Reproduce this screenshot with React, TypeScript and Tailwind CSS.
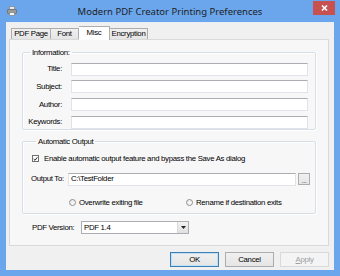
import React from "react";

const F = { fontFamily: '"Liberation Sans", Arial, sans-serif', letterSpacing: "-0.3px" } as React.CSSProperties;

function Input({ value = "", className = "" }: { value?: string; className?: string }) {
  return (
    <div
      className={
        "h-[13px] bg-white border border-[#e2e3ea] border-t-[#abadb3] flex items-center px-[2px] text-[7.8px] text-black leading-none whitespace-nowrap " +
        className
      }
    >
      {value}
    </div>
  );
}

function Group({ title, className = "", children }: { title: string; className?: string; children: React.ReactNode }) {
  return (
    <fieldset
      className={
        "border border-[#d5dfe5] rounded-[2px] shadow-[inset_1px_1px_0_#ffffff,1px_1px_0_#ffffff] " + className
      }
    >
      <legend className="ml-[4px] px-[2px] text-[7.8px] leading-none text-black">{title}</legend>
      {children}
    </fieldset>
  );
}

function Radio({ label }: { label: string }) {
  return (
    <div className="flex items-center gap-[3px]">
      <div className="w-[7px] h-[7px] rounded-full border border-[#8e8f8f] bg-gradient-to-br from-[#e6e6e6] to-white" />
      <span className="text-[7.8px] leading-none whitespace-nowrap">{label}</span>
    </div>
  );
}

function Btn({ label, variant }: { label: string; variant: "default" | "normal" | "disabled" }) {
  const cls =
    variant === "default"
      ? "border-[#3c7fb1] bg-gradient-to-b from-[#f0f0f0] to-[#e5e5e5] text-black shadow-[inset_0_0_0_1px_#bfe0f7]"
      : variant === "normal"
      ? "border-[#acacac] bg-gradient-to-b from-[#f0f0f0] to-[#e5e5e5] text-black"
      : "border-[#d9d9d9] bg-[#f4f4f4] text-[#a0a0a0]";
  return (
    <div className={"w-[49px] h-[15px] border flex items-center justify-center text-[7.8px] leading-none " + cls}>
      {variant === "disabled" ? (
        <span>
          <span className="underline">A</span>pply
        </span>
      ) : (
        label
      )}
    </div>
  );
}

const tabBase =
  "border border-[#adadad] border-b-0 flex items-center justify-center text-[7.8px] leading-none whitespace-nowrap";

export default function App() {
  return (
    <div className="w-[340px] h-[276px] bg-[#6ba6ec] flex flex-col overflow-hidden" style={F}>
      {/* Title bar */}
      <div className="h-[22px] relative flex items-center justify-center shrink-0">
        <svg className="absolute left-[7px] top-[6px]" width="10" height="10" viewBox="0 0 10 10">
          <rect x="2.5" y="0.5" width="5" height="3" fill="#e9e9e9" stroke="#8a8a8a" strokeWidth="0.8" />
          <rect x="0.5" y="3.5" width="9" height="4" rx="0.5" fill="#9a9a9a" stroke="#6e6e6e" strokeWidth="0.8" />
          <rect x="2.5" y="6.5" width="5" height="3" fill="#f4f4f4" stroke="#8a8a8a" strokeWidth="0.8" />
        </svg>
        <span
          className="text-[9.5px] text-[#1e1e1e] leading-none mt-[1px]"
          style={{ fontFamily: '"Noto Sans", "Liberation Sans", sans-serif', letterSpacing: "0px" }}
        >
          Modern PDF Creator Printing Preferences
        </span>
        <div className="absolute right-[5px] top-[1px] w-[22px] h-[14px] bg-[#c75050] flex items-center justify-center">
          <svg width="7" height="6" viewBox="0 0 7 6">
            <path d="M1 0.5 L6 5.5 M6 0.5 L1 5.5" stroke="#ffffff" strokeWidth="1.6" />
          </svg>
        </div>
      </div>

      {/* Client area */}
      <div className="flex-1 mx-[6px] mb-[6px] bg-[#f0f0f0] flex flex-col border-t border-[#e8eef6]">
        {/* Tabs */}
        <div className="flex items-end pl-[5px] h-[16px] relative z-10">
          <div className={tabBase + " h-[11px] w-[40px] bg-gradient-to-b from-[#f0f0f0] to-[#e5e5e5]"}>PDF Page</div>
          <div className={tabBase + " border-l-0 h-[11px] w-[28px] bg-gradient-to-b from-[#f0f0f0] to-[#e5e5e5]"}>Font</div>
          <div className={tabBase + " border-l-0 h-[14px] w-[31px] mb-[-1px] bg-white pb-[2px]"}>Misc</div>
          <div className={tabBase + " border-l-0 h-[11px] w-[38px] bg-gradient-to-b from-[#f0f0f0] to-[#e5e5e5]"}>Encryption</div>
        </div>

        {/* Panel */}
        <div className="ml-[3px] mr-[5px] h-[207px] border border-[#d9d9d9] bg-[#f7f7f7] px-[12px] pt-[9px] flex flex-col">
          <Group title="Information:" className="w-[294px] h-[81px] pl-[3px] pr-[7px] pt-[6px]">
            <div className="flex flex-col gap-[4.6px]">
              {["Title:", "Subject:", "Author:", "Keywords:"].map((l) => (
                <div key={l} className="flex items-center h-[13px]">
                  <div className="w-[37px] text-right text-[7.8px] leading-none pr-[1px]">{l}</div>
                  <Input className="ml-[8px] flex-1" />
                </div>
              ))}
            </div>
          </Group>

          <Group title="Automatic Output" className="w-[294px] h-[76px] mt-[8px] pl-[9px] pr-[5px] pt-[8px]">
            <div className="flex items-center h-[10px] gap-[5px]">
              <div className="w-[7px] h-[7px] border border-[#707070] bg-white flex items-center justify-center">
                <svg width="6" height="6" viewBox="0 0 6 6">
                  <path d="M0.8 3 L2.4 4.6 L5.2 1" stroke="#1a1a1a" strokeWidth="1.2" fill="none" />
                </svg>
              </div>
              <span className="text-[7.8px] leading-none whitespace-nowrap">
                Enable automatic output feature and bypass the Save As dialog
              </span>
            </div>
            <div className="flex items-center mt-[9px] h-[13px]">
              <span className="text-[7.8px] leading-none w-[37px] -ml-[1px] whitespace-nowrap">Output To:</span>
              <Input value="C:\TestFolder" className="w-[228px]" />
              <div className="ml-[2px] w-[12px] h-[12px] border border-[#acacac] bg-gradient-to-b from-[#f0f0f0] to-[#e5e5e5] flex items-end justify-center text-[7px] leading-[7px] text-[#444]">
                ...
              </div>
            </div>
            <div className="flex items-center mt-[12px] h-[10px]">
              <div className="ml-[37px] w-[117px]">
                <Radio label="Overwrite exiting file" />
              </div>
              <Radio label="Rename if destination exits" />
            </div>
          </Group>

          <div className="flex items-center mt-[7px] h-[13px] pl-[10px]">
            <span className="text-[7.8px] leading-none w-[49px] whitespace-nowrap">PDF Version:</span>
            <div className="w-[108px] h-[13px] bg-white border border-[#abadb3] flex items-center">
              <span className="flex-1 text-[7.8px] leading-none pl-[2px]">PDF 1.4</span>
              <div className="w-[11px] h-[11px] border-l border-[#d9d9d9] bg-gradient-to-b from-[#f2f2f2] to-[#e0e0e0] flex items-center justify-center">
                <svg width="5" height="3" viewBox="0 0 5 3">
                  <path d="M0 0 H5 L2.5 3 Z" fill="#222" />
                </svg>
              </div>
            </div>
          </div>
        </div>

        {/* Buttons */}
        <div className="flex justify-end gap-[6px] mr-[5px] mt-[6px]">
          <Btn label="OK" variant="default" />
          <Btn label="Cancel" variant="normal" />
          <Btn label="Apply" variant="disabled" />
        </div>
      </div>
    </div>
  );
}
